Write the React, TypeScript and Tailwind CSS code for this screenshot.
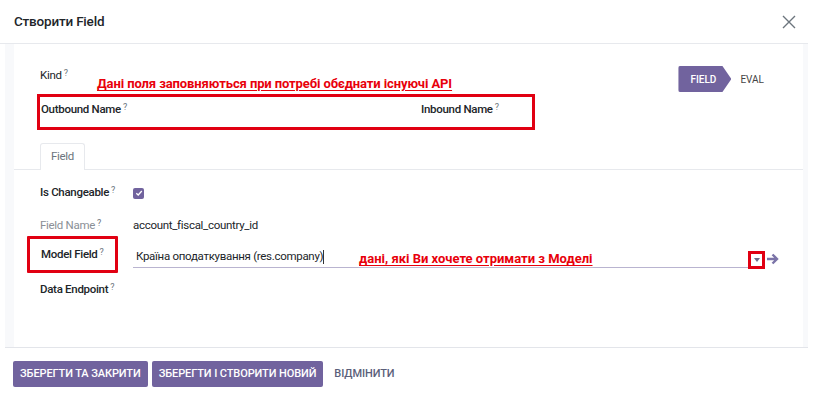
const Q = () => <sup className="ml-[2px] text-[9px] font-normal text-[#6c757d] relative -top-[3px]">?</sup>;

const Note = ({ children, className = "" }: { children: React.ReactNode; className?: string }) => (
  <span
    className={`font-bold text-[13px] text-[#e8000b] underline underline-offset-2 ${className}`}
    style={{ textShadow: "0 0 2px #fff, 0 0 2px #fff" }}
  >
    {children}
  </span>
);

export default function App() {
  return (
    <div className="w-[820px] h-[404px] bg-white text-[#212529] font-['Roboto',sans-serif] overflow-hidden">
      {/* header */}
      <div className="flex h-[44px] items-center justify-between border-b border-[#e7e9ed] pl-[14px] pr-[16px] w-[808px]">
        <h3 className="text-[13.5px] font-medium tracking-[-0.2px]">Створити Field</h3>
        <svg width="14" height="14" viewBox="0 0 14 14" className="mr-[-4px]">
          <path d="M1 1L13 13M13 1L1 13" stroke="#6c757d" strokeWidth="1.4" />
        </svg>
      </div>

      {/* body */}
      <div className="w-[803px] ml-[5px] bg-[#f8f9fb] border-b border-[#e3e5ea] h-[304px] flex">
        <div className="ml-[9px] w-[789px] bg-white h-full text-[11.5px] tracking-[-0.3px]">
          <div className="flex items-start justify-between pt-[22px] pl-[26px] pr-[39px]">
            <div className="relative">
              <div className="leading-[16px] pt-[1px]">Kind<Q /></div>
              <div className="absolute left-[57px] top-[8px] whitespace-nowrap">
                <Note className="tracking-[-0.1px]">Дані поля заповняються при потребі обєднати існуючі API</Note>
              </div>
            </div>
            <div className="flex items-center mt-[0px] tracking-normal">
              <div className="relative h-[26px] w-[53px] bg-[#71639e] text-white text-[10px] font-medium flex items-center pl-[12px] rounded-l-[2px]"
                style={{ clipPath: "polygon(0 0, 44px 0, 53px 50%, 44px 100%, 0 100%)" }}>
                FIELD
              </div>
              <span className="ml-[9px] text-[10px] text-[#444]">EVAL</span>
            </div>
          </div>

          <div className="mt-[2px] ml-[23px] w-[498px] h-[36px] border-[3px] border-[#e10012] flex items-center">
            <div className="w-[381px] pl-[1px] -mt-[4px] font-medium">Outbound Name<Q /></div>
            <div className="-mt-[4px] font-medium">Inbound Name<Q /></div>
          </div>

          {/* tabs */}
          <div className="mt-[13px] border-b border-[#e7e9ed] h-[27px] flex pl-[26px]">
            <div className="h-[27px] px-[10px] border border-b-0 border-[#e7e9ed] rounded-t-[3px] bg-white text-[#6c757d] flex items-center -mb-px">
              Field
            </div>
          </div>

          <div className="pl-[26px] pt-[15px]">
            <div className="flex items-center h-[16px]">
              <div className="w-[93px] font-medium">Is Changeable<Q /></div>
              <div className="w-[11px] h-[11px] rounded-[2px] bg-[#71639e] flex items-center justify-center">
                <svg width="8" height="8" viewBox="0 0 8 8"><path d="M1.3 4.2L3.2 6L6.8 2" stroke="#fff" strokeWidth="1.3" fill="none" /></svg>
              </div>
            </div>
            <div className="flex items-center h-[16px] mt-[17px]">
              <div className="w-[93px] text-[#8a8f96]">Field Name<Q /></div>
              <div>account_fiscal_country_id</div>
            </div>
            <div className="flex items-end mt-[2px] h-[37px] relative">
              <div className="-ml-[13px] w-[91px] h-[37px] border-[3px] border-[#e10012] flex items-center pl-[11px] font-medium rounded-[1px]">
                Model Field<Q />
              </div>
              <div className="ml-[15px] mb-[5px] relative w-[618px] h-[21px] border-b border-[#b9b4d0] flex items-center">
                <span className="pl-[3px]">Країна оподаткування (res.company)</span>
                <span className="w-px h-[14px] bg-[#333]" />
                <div className="absolute left-[226px] top-[2px] whitespace-nowrap">
                  <Note className="tracking-[0px]">дані, які Ви хочете отримати з Моделі</Note>
                </div>
                <div className="absolute -right-[14px] -bottom-[2px] w-[17px] h-[18px] border-[3px] border-[#e10012] bg-white flex items-center justify-center">
                  <svg width="6" height="4" viewBox="0 0 6 4"><path d="M0 0H6L3 4Z" fill="#6c6a8a" /></svg>
                </div>
              </div>
              <svg width="13" height="12" viewBox="0 0 13 12" className="ml-[15px] mb-[8px]">
                <path d="M1 6H11M6.5 1.5L11 6L6.5 10.5" stroke="#7b74a8" strokeWidth="2.4" fill="none" />
              </svg>
            </div>
            <div className="flex items-center h-[16px] mt-[9px] font-medium">Data Endpoint<Q /></div>
          </div>
        </div>
      </div>

      {/* footer */}
      <div className="flex items-center gap-[4px] pl-[13px] pt-[13px] text-[11px] tracking-[-0.1px]">
        <button className="h-[26px] px-[7px] bg-[#71639e] text-white font-medium rounded-[2px]">ЗБЕРЕГТИ ТА ЗАКРИТИ</button>
        <button className="h-[26px] px-[7px] bg-[#71639e] text-white font-medium rounded-[2px]">ЗБЕРЕГТИ І СТВОРИТИ НОВИЙ</button>
        <button className="h-[26px] px-[7px] text-[#5b5f7a] font-medium">ВІДМІНИТИ</button>
      </div>
    </div>
  );
}
